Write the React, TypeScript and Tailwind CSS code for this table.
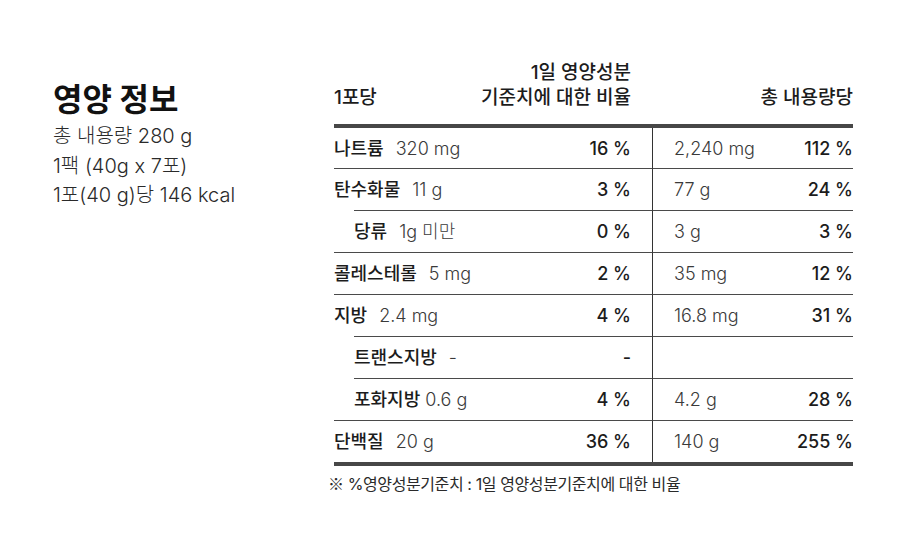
import React from "react"

type Row = {
  label: string
  amount: string
  daily: string
  total?: string
  totalDaily?: string
  indent?: boolean
  tight?: boolean
}

const ROWS: Row[] = [
  { label: "나트륨", amount: "320 mg", daily: "16 %", total: "2,240 mg", totalDaily: "112 %" },
  { label: "탄수화물", amount: "11 g", daily: "3 %", total: "77 g", totalDaily: "24 %" },
  { label: "당류", amount: "1g 미만", daily: "0 %", total: "3 g", totalDaily: "3 %", indent: true },
  { label: "콜레스테롤", amount: "5 mg", daily: "2 %", total: "35 mg", totalDaily: "12 %" },
  { label: "지방", amount: "2.4 mg", daily: "4 %", total: "16.8 mg", totalDaily: "31 %" },
  { label: "트랜스지방", amount: "-", daily: "-", indent: true },
  { label: "포화지방", amount: "0.6 g", daily: "4 %", total: "4.2 g", totalDaily: "28 %", indent: true, tight: true },
  { label: "단백질", amount: "20 g", daily: "36 %", total: "140 g", totalDaily: "255 %" },
]

function NutritionRow({ row, first }: { row: Row; first: boolean }) {
  return (
    <div className="flex text-[18px]">
      <div className="w-[318px]">
        <div
          className={[
            "flex items-center justify-between pr-[21px]",
            first ? "h-[40px]" : "h-[42px] border-t border-[#4a4a4a]",
            row.indent ? "ml-[20px]" : "",
          ].join(" ")}
        >
          <p>
            <span className="font-medium text-[#1c1c1c]">{row.label}</span>
            <span className={(row.tight ? "ml-[5px]" : "ml-[12px]") + " font-light text-[#3a3a3a]"}>{row.amount}</span>
          </p>
          <span className="font-medium text-[#1c1c1c]">{row.daily}</span>
        </div>
      </div>
      <div
        className={[
          "flex flex-1 items-center justify-between border-l border-[#333] pl-[21px]",
          first ? "h-[40px]" : "h-[42px] border-t border-t-[#4a4a4a]",
        ].join(" ")}
      >
        <span className="font-light text-[#3a3a3a]">{row.total}</span>
        <span className="font-medium text-[#1c1c1c]">{row.totalDaily}</span>
      </div>
    </div>
  )
}

export default function App() {
  return (
    <div
      className="flex h-[540px] w-[900px] bg-white pl-[53px] pt-[60px] text-[#1c1c1c]"
      style={{ fontFamily: 'Inter, "Noto Sans CJK KR", sans-serif' }}
    >
      {/* 왼쪽 요약 */}
      <div className="w-[281px] pt-[21px]">
        <h1 className="text-[32px] font-bold leading-[38px] text-[#111]">영양 정보</h1>
        <div className="mt-[3px] text-[20px] font-light leading-[29.5px] text-[#2a2a2a]">
          <p>총 내용량 280 g</p>
          <p>1팩 (40g x 7포)</p>
          <p>1포(40 g)당 146 kcal</p>
        </div>
      </div>

      {/* 영양성분 표 */}
      <div className="w-[519px]">
        <div className="flex h-[64px] items-end pb-[14px] text-[19px] font-medium leading-[25px]">
          <div className="flex w-[318px] items-end justify-between pr-[21px]">
            <span>1포당</span>
            <div className="text-right">
              <p>1일 영양성분</p>
              <p>기준치에 대한 비율</p>
            </div>
          </div>
          <div className="flex-1 text-right">총 내용량당</div>
        </div>
        <div className="h-[4px] bg-[#474747]" />
        {ROWS.map((row, i) => (
          <NutritionRow key={row.label} row={row} first={i === 0} />
        ))}
        <div className="h-[4px] bg-[#474747]" />
        <p className="-ml-[6px] mt-[6px] text-[16px] leading-[22px] tracking-[-0.4px] text-[#2a2a2a]">
          <span style={{ fontFamily: '"Noto Sans CJK KR", sans-serif' }}>※</span> %영양성분기준치 : 1일 영양성분기준치에 대한 비율
        </p>
      </div>
    </div>
  )
}
